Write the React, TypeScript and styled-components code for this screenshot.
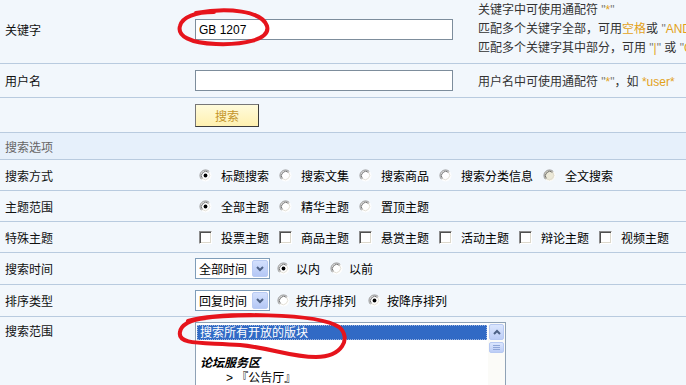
import styled, { createGlobalStyle } from "styled-components";

const GlobalStyle = createGlobalStyle`
  html, body {
    margin: 0;
    padding: 0;
    background: #f2f7fc;
    overflow: hidden;
  }
  body {
    font-family: "Liberation Sans", "Noto Sans CJK SC", sans-serif;
    font-size: 12px;
    color: #000;
  }
`;

const Page = styled.div`
  position: relative;
  width: 686px;
  height: 385px;
  overflow: hidden;
`;

const Row = styled.div<{ $h: number; $head?: boolean; $pb?: number; $top?: boolean }>`
  display: grid;
  grid-template-columns: 195px 283px 1fr;
  align-items: ${(p) => (p.$top ? "start" : "center")};
  width: 920px;
  height: ${(p) => p.$h}px;
  padding-bottom: ${(p) => p.$pb || 0}px;
  border-bottom: 1px solid #b9cbdf;
  background: ${(p) => (p.$head ? "#e6f0fb" : "transparent")};
`;

const Label = styled.div<{ $muted?: boolean; $pt?: number }>`
  padding-left: 5px;
  padding-top: ${(p) => p.$pt || 0}px;
  color: ${(p) => (p.$muted ? "#666" : "#111")};
  white-space: nowrap;
`;

const Field = styled.div<{ $wide?: boolean; $pt?: number }>`
  display: flex;
  align-items: center;
  grid-column: ${(p) => (p.$wide ? "2 / 4" : "auto")};
  padding-top: ${(p) => p.$pt || 0}px;
  white-space: nowrap;
`;

const TextInput = styled.input`
  box-sizing: border-box;
  width: 258px;
  height: 21px;
  margin: 0;
  padding: 0 3px;
  border: 1px solid #7d8d9c;
  background: #fff;
  font: 12px "Liberation Sans", "Noto Sans CJK SC", sans-serif;
  color: #000;
  outline: none;
`;

const Help = styled.div<{ $pt?: number }>`
  align-self: start;
  padding-top: ${(p) => p.$pt || 0}px;
  color: #333;
  line-height: 19px;
  white-space: nowrap;
`;

const HelpSingle = styled.div`
  color: #333;
  white-space: nowrap;
`;

const Gold = styled.span`
  color: #e3a21a;
`;

const Quote = styled.span`
  color: #777;
`;

const SearchButton = styled.button`
  box-sizing: border-box;
  width: 64px;
  height: 23px;
  margin: 0;
  padding: 0;
  background: linear-gradient(#fffbdc, #fff1b0);
  border: 1px solid #777;
  border-right-color: #3c3c3c;
  border-bottom-color: #3c3c3c;
  color: #c4952b;
  font: 12px "Liberation Sans", "Noto Sans CJK SC", sans-serif;
`;

const Opt = styled.span<{ $gap?: number }>`
  display: inline-flex;
  align-items: center;
  margin-right: ${(p) => (p.$gap === undefined ? 6 : p.$gap)}px;
`;

const MarkBox = styled.span<{ $gap?: number }>`
  display: inline-flex;
  margin: 0 ${(p) => (p.$gap === undefined ? 9 : p.$gap)}px 0 4px;
`;

const RadioMark = ({ checked, disabled }: { checked?: boolean; disabled?: boolean }) => (
  <svg width="13" height="13" viewBox="0 0 13 13">
    <circle cx="6.5" cy="6.5" r="5.5" fill={disabled ? "#ece9d8" : "#fff"} />
    <path d="M2.6 10.4 A5.5 5.5 0 0 1 10.4 2.6" fill="none" stroke="#8c8c8c" strokeWidth="1" />
    <path d="M3.4 9.6 A4.4 4.4 0 0 1 9.6 3.4" fill="none" stroke="#505050" strokeWidth="0.8" />
    <path d="M2.6 10.4 A5.5 5.5 0 0 0 10.4 2.6" fill="none" stroke="#ffffff" strokeWidth="1" />
    <path d="M3.4 9.6 A4.4 4.4 0 0 0 9.6 3.4" fill="none" stroke="#dcd8cc" strokeWidth="0.8" />
    {checked && <circle cx="6.5" cy="6.5" r="1.9" fill="#000" />}
  </svg>
);

const CheckMark = styled.span`
  box-sizing: border-box;
  display: inline-block;
  width: 13px;
  height: 13px;
  background: #fff;
  border: 1px solid;
  border-color: #8c8c8c #fff #fff #8c8c8c;
  box-shadow: inset 1px 1px 0 #505050, inset -1px -1px 0 #dcd8cc;
`;

const Radio = ({
  label,
  checked,
  disabled,
  gap,
  after,
}: {
  label: string;
  checked?: boolean;
  disabled?: boolean;
  gap?: number;
  after?: number;
}) => (
  <Opt $gap={after}>
    <MarkBox $gap={gap}>
      <RadioMark checked={checked} disabled={disabled} />
    </MarkBox>
    {label}
  </Opt>
);

const Check = ({ label }: { label: string }) => (
  <Opt>
    <MarkBox>
      <CheckMark />
    </MarkBox>
    {label}
  </Opt>
);

const SelectBox = styled.div`
  box-sizing: border-box;
  display: inline-flex;
  align-items: center;
  justify-content: space-between;
  width: 75px;
  height: 21px;
  margin-right: 3px;
  padding: 0 1px 0 3px;
  border: 1px solid #7f9db9;
  background: #fff;
`;

const DropButton = styled.span`
  box-sizing: border-box;
  display: inline-flex;
  align-items: center;
  justify-content: center;
  width: 16px;
  height: 17px;
  border: 1px solid #b9cbf3;
  border-radius: 2px;
  background: linear-gradient(#d3e0fd, #b4c7f5);
`;

const Select = ({ value }: { value: string }) => (
  <SelectBox>
    {value}
    <DropButton>
      <svg width="8" height="6" viewBox="0 0 8 6">
        <polyline points="1,1 4,4 7,1" fill="none" stroke="#4d6185" strokeWidth="2" />
      </svg>
    </DropButton>
  </SelectBox>
);

const ListBox = styled.div`
  box-sizing: border-box;
  display: flex;
  width: 311px;
  height: 80px;
  border: 1px solid #8fa2b6;
  background: #fff;
`;

const Options = styled.div`
  flex: 1;
  padding: 2px 1px 0 1px;
`;

const ListOption = styled.div<{ $selected?: boolean; $group?: boolean; $indent?: number }>`
  box-sizing: border-box;
  height: 15px;
  line-height: 14px;
  padding-left: ${(p) => 2 + (p.$indent || 0)}px;
  background: ${(p) => (p.$selected ? "#316ac5" : "transparent")};
  color: ${(p) => (p.$selected ? "#fff" : "#000")};
  border: 1px dotted ${(p) => (p.$selected ? "#9fb6df" : "transparent")};
  font-weight: ${(p) => (p.$group ? "bold" : "normal")};
  font-style: ${(p) => (p.$group ? "italic" : "normal")};
  white-space: nowrap;
`;

const ScrollTrack = styled.div`
  display: flex;
  flex-direction: column;
  align-items: center;
  width: 17px;
  padding-top: 1px;
  gap: 2px;
  background: #fbfbf8;
`;

const ScrollButton = styled.div`
  box-sizing: border-box;
  display: flex;
  align-items: center;
  justify-content: center;
  width: 15px;
  height: 16px;
  border: 1px solid #b7c9f2;
  border-radius: 2px;
  background: linear-gradient(#dbe6fe, #bccdf6);
`;

const ScrollThumb = styled(ScrollButton)`
  height: 11px;
  flex-direction: column;
  gap: 1px;
`;

const Grip = styled.span`
  display: block;
  width: 7px;
  height: 1px;
  background: #8fa6d8;
`;

const Annotations = styled.svg`
  position: absolute;
  left: 0;
  top: 0;
  pointer-events: none;
`;

export default function App() {
  return (
    <>
      <GlobalStyle />
      <Page>
        <Row $h={59} $pb={4}>
          <Label>关键字</Label>
          <Field>
            <TextInput defaultValue="GB 1207" readOnly />
          </Field>
          <Help $pt={1}>
            <div>
              关键字中可使用通配符 <Quote>"</Quote>
              <Gold>*</Gold>
              <Quote>"</Quote>
            </div>
            <div>
              匹配多个关键字全部，可用<Gold>空格</Gold>或 <Quote>"</Quote>
              <Gold>AND</Gold>
              <Quote>"</Quote> 连接
            </div>
            <div>
              匹配多个关键字其中部分，可用 <Quote>"</Quote>
              <Gold>|</Gold>
              <Quote>"</Quote> 或 <Quote>"</Quote>
              <Gold>OR</Gold>
              <Quote>"</Quote> 连接
            </div>
          </Help>
        </Row>
        <Row $h={33}>
          <Label>用户名</Label>
          <Field>
            <TextInput readOnly />
          </Field>
          <HelpSingle>
            用户名中可使用通配符 <Quote>"</Quote>
            <Gold>*</Gold>
            <Quote>"</Quote>，如 <Gold>*user*</Gold>
          </HelpSingle>
        </Row>
        <Row $h={34}>
          <Label />
          <Field $wide>
            <SearchButton>搜索</SearchButton>
          </Field>
        </Row>
        <Row $h={26} $head>
          <Label $muted>搜索选项</Label>
        </Row>
        <Row $h={30}>
          <Label>搜索方式</Label>
          <Field $wide>
            <Radio label="标题搜索" checked />
            <Radio label="搜索文集" />
            <Radio label="搜索商品" />
            <Radio label="搜索分类信息" />
            <Radio label="全文搜索" disabled />
          </Field>
        </Row>
        <Row $h={30}>
          <Label>主题范围</Label>
          <Field $wide>
            <Radio label="全部主题" checked />
            <Radio label="精华主题" />
            <Radio label="置顶主题" />
          </Field>
        </Row>
        <Row $h={30}>
          <Label>特殊主题</Label>
          <Field $wide>
            <Check label="投票主题" />
            <Check label="商品主题" />
            <Check label="悬赏主题" />
            <Check label="活动主题" />
            <Check label="辩论主题" />
            <Check label="视频主题" />
          </Field>
        </Row>
        <Row $h={31}>
          <Label>搜索时间</Label>
          <Field $wide>
            <Select value="全部时间" />
            <Radio label="以内" checked gap={6} />
            <Radio label="以前" gap={6} />
          </Field>
        </Row>
        <Row $h={31}>
          <Label>排序类型</Label>
          <Field $wide>
            <Select value="回复时间" />
            <Radio label="按升序排列" gap={6} after={8} />
            <Radio label="按降序排列" checked gap={6} />
          </Field>
        </Row>
        <Row $h={90} $top>
          <Label $pt={5}>搜索范围</Label>
          <Field $wide $pt={5}>
            <ListBox>
              <Options>
                <ListOption $selected>搜索所有开放的版块</ListOption>
                <ListOption />
                <ListOption $group>论坛服务区</ListOption>
                <ListOption $indent={26}>&gt; 『公告厅』</ListOption>
              </Options>
              <ScrollTrack>
                <ScrollButton>
                  <svg width="8" height="6" viewBox="0 0 8 6">
                    <polyline points="1,5 4,2 7,5" fill="none" stroke="#4d6185" strokeWidth="2" />
                  </svg>
                </ScrollButton>
                <ScrollThumb>
                  <Grip />
                  <Grip />
                  <Grip />
                </ScrollThumb>
              </ScrollTrack>
            </ListBox>
          </Field>
        </Row>
        <Annotations width="686" height="385" viewBox="0 0 686 385">
          <path
            d="M196 13 C228 7 262 11 267 26 C271 40 242 45 216 44 C190 43 177 36 180 26 C182 17 196 12 214 12"
            fill="none"
            stroke="#e6141c"
            strokeWidth="4"
            strokeLinecap="round"
          />
          <path
            d="M188 321 C222 312 318 313 339 327 C352 338 342 357 316 357 C290 357 272 348 240 345 C206 342 177 346 180 332 C181 325 190 320 206 318"
            fill="none"
            stroke="#e6141c"
            strokeWidth="4"
            strokeLinecap="round"
          />
        </Annotations>
      </Page>
    </>
  );
}
